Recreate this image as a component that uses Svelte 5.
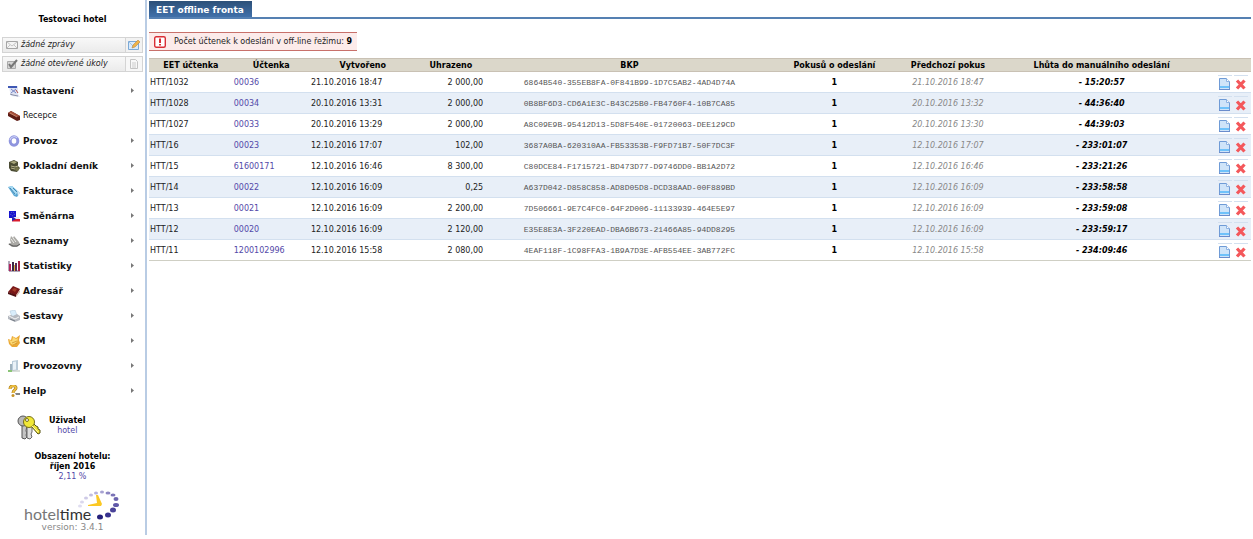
<script>
	let selected = $state("");

	const menu = [
		{
			title: "Nastavení",
			icon: `<path d="M1 1h9v8l2 3-9-1-1-4z" fill="#dfe3f3"/><path d="M0 1h9v2H0z" fill="#3f58b4"/><path d="M3 4l5 4M8 4L3 8" stroke="#7585c4"/><path d="M2 9l3 1 5 1" fill="none" stroke="#8a8fa6"/><path d="M8 5l2 3" stroke="#b34f4f"/>`,
		},
		{
			title: "Recepce",
			plain: true,
			icon: `<path d="M0 3l3-2 9 5v4l-3 1-9-5z" fill="#5e1c15"/><path d="M0 3l3-2 9 5-3 1z" fill="#a5503b"/><path d="M2 3l7 4" stroke="#d39a80" stroke-width=".7"/>`,
		},
		{
			title: "Provoz",
			icon: `<ellipse cx="6" cy="6" rx="3.800" ry="4.300" fill="none" stroke="#8f95de" stroke-width="3"/><path d="M2 5c1-4 6-4 7-2" fill="none" stroke="#c9cdf6" stroke-width="1.200"/>`,
		},
		{
			title: "Pokladní deník",
			icon: `<path d="M1 2l5-2 4 2v4l2 2-3 4-6-1-2-3z" fill="#4b4c35"/><path d="M2 2l4-1 3 1-3 2z" fill="#a9a77c"/><path d="M3 6l4 1 3-1M3 8l4 1" stroke="#b9b48c" fill="none"/><circle cx="9" cy="9" r="2" fill="#77764c"/>`,
		},
		{
			title: "Fakturace",
			icon: `<path d="M0 2l4-1 8 7-3 4-3-1z" fill="#5ba7d3"/><path d="M1 2l3-1 6 6-3 3z" fill="#a8dbf4"/><path d="M5 3l5 5M2 3l5 6" stroke="#347ca9" stroke-width=".9"/><path d="M9 6l3 2-2 3z" fill="#ddeaf2"/>`,
		},
		{
			title: "Směnárna",
			icon: `<path d="M1 1h7v7H1z" fill="#1713cf"/><circle cx="4.500" cy="4" r="1.800" fill="none" stroke="#7270c3" stroke-dasharray="1 1"/><path d="M4 7h7v2H4z" fill="#eee"/><path d="M4 9h8v2.500H4z" fill="#db1c2c"/><path d="M4 6l4 3-4 2z" fill="#2425b8"/>`,
		},
		{
			title: "Seznamy",
			icon: `<path d="M2 5l1-4 2 2 1-2 5 6 1 3-3 2H4L0 9l3-1z" fill="#aaa9a5"/><path d="M3 4l3 4M5 3l3 4" stroke="#efefeb"/><path d="M1 9l4 2h4l3-2" fill="none" stroke="#555"/>`,
		},
		{
			title: "Statistiky",
			icon: `<path d="M1 1v10h11" fill="none" stroke="#625272"/><path d="M1 4h2v7H1z" fill="#b2245f"/><path d="M4 2h2v9H4z" fill="#3e2845"/><path d="M6 5h1v6H6z" fill="#e2b443"/><path d="M7 3h2v8H7z" fill="#5a2c55"/><path d="M10 1h2v10h-2z" fill="#a52344"/>`,
		},
		{
			title: "Adresář",
			icon: `<path d="M0 7l5-6 7 3-4 7z" fill="#791818"/><path d="M0 7l8 3v2L0 9z" fill="#4d1012"/><path d="M8 10l4-5v2l-4 5z" fill="#d0b5a7"/><path d="M4 5l2-2 3 1-2 3z" fill="#a33c28"/>`,
		},
		{
			title: "Sestavy",
			icon: `<path d="M2 1l5-1 2 5-5 2z" fill="#d9edfb" stroke="#adc5d8" stroke-width=".5"/><path d="M0 6l3-1 2 1 4-2 3 2v4l-5 2-7-3z" fill="#b6bac1"/><path d="M1 6l6 3 4-2" fill="none" stroke="#f5f5f5"/><path d="M2 9l5 2" stroke="#747b84"/>`,
		},
		{
			title: "CRM",
			icon: `<path d="M0 4l3 1 1-4 4 2 4-3-1 5 1 3-3 4H4L1 9z" fill="#eba936"/><path d="M1 5l3 1 1-4 3 2 2-1-1 4-3 3-3-1z" fill="#fbd873"/><path d="M4 8l5-2M5 10l4-2" stroke="#c98b24" stroke-width=".7"/>`,
		},
		{
			title: "Provozovny",
			icon: `<path d="M4 1l6-1v10l-6 1z" fill="#b9cbd9"/><path d="M5 2l3-.5v8L5 10z" fill="#eaf2f8"/><path d="M2 4h2v7H2z" fill="#9fb2be"/><path d="M0 10h4v2H0z" fill="#8ac476"/><path d="M4 11h8" stroke="#b5bfb5"/>`,
		},
		{
			title: "Help",
			icon: `<path d="M2 4c0-4 6-4 6-1 0 2-3 2-3 5" fill="none" stroke="#a7781b" stroke-width="3"/><path d="M2 4c0-4 6-4 6-1 0 2-3 2-3 5" fill="none" stroke="#edc042" stroke-width="1.800"/><circle cx="5" cy="10.500" r="1.500" fill="#c69327"/><path d="M7 8h5v2H8z" fill="#828282"/>`,
		},
	];

	const receipts = [
		["HTT/1032", "00036", "21.10.2016 18:47", "2 000,00", "6864B540-355EB8FA-0F841B99-1D7C5AB2-4AD4D74A", "21.10.2016 18:47", "15:20:57"],
		["HTT/1028", "00034", "20.10.2016 13:31", "2 000,00", "0B8BF6D3-CD6A1E3C-B43C25B0-FB4760F4-10B7CA85", "20.10.2016 13:32", "44:36:40"],
		["HTT/1027", "00033", "20.10.2016 13:29", "2 000,00", "A8C09E9B-95412D13-5D8F540E-01720063-DEE129CD", "20.10.2016 13:30", "44:39:03"],
		["HTT/16", "00023", "12.10.2016 17:07", "102,00", "3687A0BA-620310AA-FB53353B-F9FD71B7-50F7DC3F", "12.10.2016 17:07", "233:01:07"],
		["HTT/15", "61600171", "12.10.2016 16:46", "8 300,00", "C80DCE84-F1715721-BD473D77-D9746DD0-BB1A2D72", "12.10.2016 16:46", "233:21:26"],
		["HTT/14", "00022", "12.10.2016 16:09", "0,25", "A637D042-D858C858-AD8D05D8-DCD38AAD-00F889BD", "12.10.2016 16:09", "233:58:58"],
		["HTT/13", "00021", "12.10.2016 16:09", "2 200,00", "7D506661-9E7C4FC0-64F2D006-11133939-464E5E97", "12.10.2016 16:09", "233:59:08"],
		["HTT/12", "00020", "12.10.2016 16:09", "2 120,00", "E35E8E3A-3F220EAD-DBA6B673-21466A85-94DD8295", "12.10.2016 16:09", "233:59:17"],
		["HTT/11", "1200102996", "12.10.2016 15:58", "2 080,00", "4EAF118F-1C98FFA3-1B9A7D3E-AFB554EE-3AB772FC", "12.10.2016 15:58", "234:09:46"],
	];
</script>

<div class="page">
	<aside class="sidebar">
		<b class="hotel">Testovaci hotel</b>

		<div class="messages">
			<div class="message">
				<svg class="messageIcon" viewBox="0 0 12 12">
					<path d="M.5 2.500h11v7H.5z" fill="#f4f4f4" stroke="#a5a5a5" />
					<path d="M1 3l5 4 5-4M1 9l3-3M11 9L8 6" fill="none" stroke="#c4c4c4" />
				</svg>
				<a href="#zpravy">žádné zprávy</a>
				<button type="button" aria-label="Nová zpráva">
					<svg viewBox="0 0 12 12">
						<path d="M.5 2.500h10v8H.5z" fill="#d9eafb" stroke="#7ba9d6" />
						<path d="M1 3l4 4 5-4" fill="none" stroke="#a4c4e4" />
						<path d="M4 9l1-3 5-5 2 2-5 5z" fill="#efb348" stroke="#a87b3b" stroke-width=".5" />
					</svg>
				</button>
			</div>
			<div class="message">
				<svg class="messageIcon" viewBox="0 0 12 12">
					<path d="M1.500 3.500h8v7h-8z" fill="#d4d4d4" stroke="#aaa" />
					<path d="M3 6l2 3 6-7" fill="none" stroke="#777" stroke-width="2" />
				</svg>
				<a href="#ukoly">žádné otevřené úkoly</a>
				<button type="button" class="pale" aria-label="Nový úkol">
					<svg viewBox="0 0 12 12">
						<path d="M2.500 1.500h5l2 2v7h-7z" fill="#f8f8f8" stroke="#c4c4c4" />
						<path d="M4 5h4M4 7h4M4 9h4" stroke="#ccc" />
					</svg>
				</button>
			</div>
		</div>

		<nav>
			{#each menu as item}
				<a href="#menu" class:plain={item.plain}>
					<svg class="menuIcon" viewBox="0 0 12 12">{@html item.icon}</svg>
					<span>{item.title}</span>
					{#if !item.plain}
						<svg class="arrow" viewBox="0 0 3 5"><path d="M0 0l3 2.500L0 5z" fill="#777" /></svg>
					{/if}
				</a>
			{/each}
		</nav>

		<div class="user">
			<svg viewBox="0 0 24 26">
				<path d="M5 10v14l3 1 2-2-1-2 1-2-1-2 1-6z" fill="#c4c4c4" stroke="#555" />
				<circle cx="6" cy="7" r="5" fill="#b8b8b8" stroke="#555" />
				<path d="M10 12v12l3 1 2-2-1-3 1-2v-6z" fill="#ddd" stroke="#666" />
				<path d="M14 12l7 8 2-1v-3l-2-1v-2l-2-1-3-3z" fill="#eee33a" stroke="#56520f" />
				<circle cx="12" cy="8" r="5.500" fill="#f1e837" stroke="#77701c" />
				<circle cx="10" cy="6" r="1.500" fill="#fff" stroke="#77701c" />
				<path d="M15 12l6 6" stroke="#fff7a5" />
			</svg>
			<div>
				<b>Uživatel</b>
				<a href="#uzivatel">hotel</a>
			</div>
		</div>

		<div class="occupancy">
			<b>Obsazení hotelu:</b>
			<b>říjen 2016</b>
			<a href="#obsazeni">2,11 %</a>
		</div>

		<div class="brand">
			<svg viewBox="0 0 98 32">
				<text x="0" y="30" class="logoText">hotel<tspan class="logoTime">time</tspan></text>
				<ellipse cx="56" cy="16" rx="2" ry="1.500" fill="#dfddf0" />
				<ellipse cx="58" cy="12" rx="2" ry="1.500" fill="#dad7ed" />
				<ellipse cx="62" cy="8" rx="2" ry="1.500" fill="#cecae7" />
				<ellipse cx="67" cy="5" rx="2" ry="1.500" fill="#c3bee0" />
				<ellipse cx="72" cy="3" rx="2" ry="1.500" fill="#b6b2dc" />
				<ellipse cx="78" cy="2" rx="2" ry="1.500" fill="#a7a2d2" />
				<ellipse cx="84" cy="3" rx="2.500" ry="1.500" fill="#8d86c2" />
				<ellipse cx="89" cy="5" rx="2.500" ry="1.500" fill="#7a72b6" />
				<ellipse cx="92" cy="9" rx="2.500" ry="2" fill="#6c64ae" />
				<ellipse cx="92" cy="15" rx="3" ry="2" fill="#6058a8" />
				<ellipse cx="89" cy="20" rx="3" ry="2.500" fill="#4a4399" />
				<ellipse cx="84" cy="25" rx="3" ry="2.500" fill="#37318e" />
				<ellipse cx="76" cy="27" rx="3" ry="2.500" fill="#25217c" />
				<path d="M72 5h2l4 9-1 2-13 0v-1l9-2z" fill="#fbc823" />
			</svg>
			<small>version: 3.4.1</small>
		</div>
	</aside>

	<main>
		<div class="tabs">
			<button type="button">EET offline fronta</button>
		</div>

		<div class="notice">
			<svg viewBox="0 0 12 12">
				<rect x=".7" y=".7" width="10.600" height="10.600" rx="1.500" fill="#fff" stroke="#d92e35" stroke-width="1.400" />
				<path d="M6 2.500v4.500M6 8v1.500" stroke="#d92e35" stroke-width="2" />
			</svg>
			<span>Počet účtenek k odeslání v off-line řežimu: <b>9</b></span>
		</div>

		<table>
			<colgroup>
				<col class="cEet" />
				<col class="cReceipt" />
				<col class="cCreated" />
				<col class="cPaid" />
				<col class="cBkp" />
				<col class="cTries" />
				<col class="cLast" />
				<col class="cLimit" />
				<col />
			</colgroup>
			<thead>
				<tr>
					<th>EET účtenka</th>
					<th>Účtenka</th>
					<th>Vytvořeno</th>
					<th>Uhrazeno</th>
					<th>BKP</th>
					<th>Pokusů o odeslání</th>
					<th>Předchozí pokus</th>
					<th>Lhůta do manuálního odeslání</th>
					<th></th>
				</tr>
			</thead>
			<tbody>
				{#each receipts as [eet, receipt, created, paid, bkp, last, limit]}
					<tr class:selected={selected === eet}>
						<td>{eet}</td>
						<td><a href="#uctenka">{receipt}</a></td>
						<td>{created}</td>
						<td class="paid">{paid}</td>
						<td class="bkp">{bkp}</td>
						<td class="center"><b>1</b></td>
						<td class="last">{last}</td>
						<td class="limit">- {limit}</td>
						<td>
							<div class="actions">
								<button type="button" aria-label="Detail {eet}" onclick={() => (selected = eet)}>
									<svg viewBox="0 0 14 14">
										<path d="M1.500 1.500h7l3 3v8h-10z" fill="#cfe4f9" stroke="#6f9bd6" stroke-linejoin="round" />
										<path d="M8.500 1.500v3h3" fill="#fff" stroke="#8db2e2" />
										<path d="M2 9h9v2H2z" fill="#6fc2fa" />
										<path d="M1 12.500h11" stroke="#6a8ccc" />
									</svg>
								</button>
								<button type="button" aria-label="Smazat {eet}">
									<svg viewBox="0 0 14 14">
										<path d="M3 3.500l7.500 8M10.500 3.500l-7.500 8" stroke="#f4585b" stroke-width="3.200" />
									</svg>
								</button>
							</div>
						</td>
					</tr>
				{/each}
			</tbody>
		</table>
	</main>
</div>

<style>
	:global(body) {
		margin: 0;
		background: #fff;
	}

	.page {
		display: flex;
		align-items: flex-start;
		font: 8px/10px "DejaVu Sans", Verdana, sans-serif;
		color: #222;
	}

	a {
		color: #5349a8;
		text-decoration: none;
	}
	b {
		color: #000;
	}
	svg {
		display: block;
		flex-shrink: 0;
	}
	button {
		padding: 0;
		border: 0;
		background: none;
		font: inherit;
		cursor: pointer;
	}

	.sidebar {
		box-sizing: border-box;
		flex: 0 0 147px;
		padding: 15px 2px 3px;
		border-right: 2px solid #b9cce4;
	}
	.hotel {
		display: block;
		text-align: center;
	}

	.messages {
		display: flex;
		flex-direction: column;
		gap: 3px;
		padding-top: 12px;
	}
	.message {
		display: flex;
		align-items: center;
		height: 14px;
		border: 1px solid #d4d4d4;
		background: linear-gradient(#f8f8f8, #ebebeb);
	}
	.messageIcon {
		width: 12px;
		height: 12px;
		margin: 0 3px;
	}
	.message a {
		flex: 1;
		font-style: italic;
		color: #222;
	}
	.message button {
		padding: 1px 2px;
		border-left: 1px solid #d4d4d4;
		background: #f2f2f2;
	}
	.message button.pale {
		background: #f7f7f7;
	}
	.message button svg {
		width: 12px;
		height: 12px;
	}

	nav {
		padding-top: 6px;
	}
	nav a {
		display: flex;
		align-items: center;
		gap: 3px;
		height: 25px;
		padding: 0 9px 0 6px;
		font-size: 9px;
		font-weight: bold;
		color: #111;
	}
	nav a.plain {
		font-size: 8px;
		font-weight: normal;
	}
	nav span {
		flex: 1;
	}
	.menuIcon {
		width: 12px;
		height: 12px;
	}
	.arrow {
		width: 3px;
		height: 5px;
	}

	.user {
		display: flex;
		gap: 8px;
		padding: 11px 0 0 15px;
	}
	.user svg {
		width: 24px;
		height: 26px;
	}
	.user div,
	.occupancy,
	.brand {
		display: flex;
		flex-direction: column;
		align-items: center;
	}
	.user div {
		padding-top: 2px;
	}
	.occupancy {
		padding-top: 12px;
	}
	.brand {
		padding-top: 8px;
	}
	.brand svg {
		width: 98px;
		height: 32px;
	}
	.brand small {
		font-size: 9px;
		color: #888;
	}
	.logoText {
		font: 400 16px Lato, sans-serif;
		fill: #777;
	}
	.logoTime {
		fill: #333;
	}

	main {
		flex: 1;
		min-width: 0;
		padding: 1px 2px 0;
	}
	.tabs {
		display: flex;
		border-bottom: 2px solid #5580b2;
	}
	.tabs button {
		height: 16px;
		padding: 1px 8px 0 7px;
		background: linear-gradient(#2c5078, #4070aa);
		font-size: 9px;
		font-weight: bold;
		color: #fff;
	}

	.notice {
		display: flex;
		align-items: center;
		gap: 8px;
		width: fit-content;
		height: 17px;
		margin: 13px 0 7px;
		padding: 0 5px;
		border: solid #c8706a;
		border-width: 1px 0;
		background: #fcebea;
	}
	.notice svg {
		width: 12px;
		height: 12px;
	}

	table {
		width: 100%;
		table-layout: fixed;
		border-collapse: collapse;
		border-bottom: 1px solid #cfcfc4;
	}
	.cEet {
		width: 7.6%;
	}
	.cReceipt {
		width: 7%;
	}
	.cCreated {
		width: 9.6%;
	}
	.cPaid {
		width: 6.4%;
	}
	.cBkp {
		width: 26%;
	}
	.cTries {
		width: 11.2%;
	}
	.cLast {
		width: 9.4%;
	}
	.cLimit {
		width: 18.5%;
	}
	th {
		height: 11px;
		padding: 1px 0 0;
		border: solid #c9c1b4;
		border-width: 1px 0;
		background: #dbd7ca;
		color: #000;
	}
	td {
		height: 18px;
		padding: 2px 1px 0;
		border-top: 1px solid #d3e0ef;
		white-space: nowrap;
	}
	tbody tr:first-child td {
		border-top-color: #c9c1b4;
	}
	tbody tr:nth-child(even) {
		background: #e8eff8;
	}
	tbody tr.selected {
		background: #dce8f6;
	}
	td.paid {
		padding-right: 3px;
		text-align: right;
	}
	.bkp {
		font-family: "Liberation Mono", monospace;
		text-align: center;
		color: #555;
	}
	.center {
		text-align: center;
	}
	.last {
		font-style: italic;
		text-align: center;
		color: #888;
	}
	.limit {
		font-style: italic;
		font-weight: bold;
		text-align: center;
		color: #000;
	}
	.actions {
		display: flex;
		justify-content: flex-end;
		gap: 2px;
		padding-right: 2px;
	}
	.actions button {
		padding-top: 1px;
		border-top: 1px solid #d3e0ef;
	}
	.actions svg {
		width: 14px;
		height: 14px;
	}
</style>
